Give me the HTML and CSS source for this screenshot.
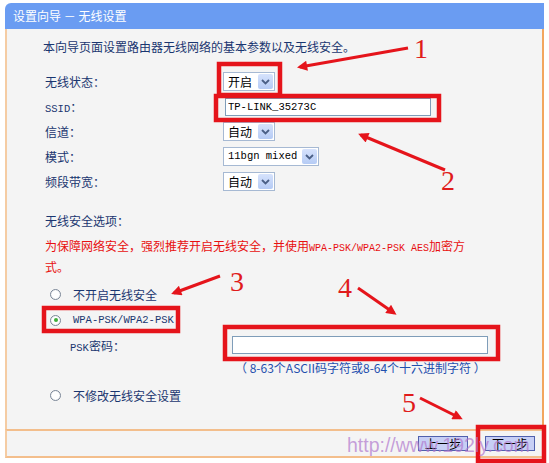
FILE: index.html
```html
<!DOCTYPE html>
<html lang="zh-CN">
<head>
    <meta charset="UTF-8">
    <title>设置向导 - 无线设置</title>
    <link rel="stylesheet" href="styles.css">
</head>
<body>
    <div class="wizard">
        <div class="title">设置向导 － 无线设置</div>
        <div class="content">
            <p class="intro">本向导页面设置路由器无线网络的基本参数以及无线安全。</p>

            <div class="fields">
                <div class="row">
                    <span class="label">无线状态：</span>
                    <span class="select short"><span>开启</span><span class="arrow"><svg width="9" height="6" viewBox="0 0 9 6"><path d="M1 1 L4.5 4.5 L8 1" fill="none" stroke="#4a5f86" stroke-width="1.8"/></svg></span></span>
                </div>
                <div class="row">
                    <span class="label"><span class="en">SSID</span>：</span>
                    <input class="text ssid" type="text" value="TP-LINK_35273C">
                </div>
                <div class="row">
                    <span class="label">信道：</span>
                    <span class="select short"><span>自动</span><span class="arrow"><svg width="9" height="6" viewBox="0 0 9 6"><path d="M1 1 L4.5 4.5 L8 1" fill="none" stroke="#4a5f86" stroke-width="1.8"/></svg></span></span>
                </div>
                <div class="row">
                    <span class="label">模式：</span>
                    <span class="select long"><span class="en">11bgn mixed</span><span class="arrow"><svg width="9" height="6" viewBox="0 0 9 6"><path d="M1 1 L4.5 4.5 L8 1" fill="none" stroke="#4a5f86" stroke-width="1.8"/></svg></span></span>
                </div>
                <div class="row">
                    <span class="label">频段带宽：</span>
                    <span class="select short"><span>自动</span><span class="arrow"><svg width="9" height="6" viewBox="0 0 9 6"><path d="M1 1 L4.5 4.5 L8 1" fill="none" stroke="#4a5f86" stroke-width="1.8"/></svg></span></span>
                </div>
            </div>

            <p class="section">无线安全选项：</p>
            <p class="warn">为保障网络安全，强烈推荐开启无线安全，并使用<span class="en">WPA-PSK/WPA2-PSK AES</span>加密方式。</p>

            <div class="option first"><span class="radio"></span>不开启无线安全</div>
            <div class="option"><span class="radio checked"></span><span class="en">WPA-PSK/WPA2-PSK</span></div>
            <div class="psk">
                <span class="psk-label"><span class="en">PSK</span>密码：</span>
                <input class="text psk-input" type="text">
            </div>
            <p class="hint">（ 8-63个ASCII码字符或8-64个十六进制字符 ）</p>
            <div class="option last"><span class="radio"></span>不修改无线安全设置</div>
        </div>
        <div class="footer">
            <button type="button">上一步</button>
            <button type="button">下一步</button>
        </div>
    </div>

    <!-- red annotations drawn over the screenshot -->
    <svg class="marks" width="549" height="463" viewBox="0 0 549 463">
        <defs>
            <marker id="head" viewBox="0 0 10 10" refX="7" refY="5" markerWidth="4" markerHeight="3.4" orient="auto">
                <path d="M0 0 L10 5 L0 10 z" fill="#e5141b"/>
            </marker>
        </defs>
        <g fill="none" stroke="#e5141b" stroke-width="4.5">
            <rect x="219" y="64" width="61" height="31"/>
            <rect x="216" y="96" width="223" height="24"/>
            <rect x="44" y="308" width="134" height="23"/>
            <rect x="225" y="327" width="273" height="32"/>
            <rect x="478" y="427" width="66" height="34"/>
        </g>
        <g stroke="#e5141b" stroke-width="3" marker-end="url(#head)">
            <line x1="408" y1="48" x2="300" y2="67"/>
            <line x1="445" y1="170" x2="361" y2="135"/>
            <line x1="220" y1="276" x2="174" y2="293"/>
            <line x1="358" y1="288" x2="394" y2="313"/>
            <line x1="420" y1="398" x2="460" y2="418"/>
        </g>
        <g class="num">
            <text x="414" y="58">1</text>
            <text x="441" y="190">2</text>
            <text x="230" y="291">3</text>
            <text x="338" y="297">4</text>
            <text x="402" y="412">5</text>
        </g>
    </svg>
    <div class="watermark">http://www.192ly.com</div>
</body>
</html>
```

FILE: styles.css
```css
body {
    margin: 0;
    background: #fff;
    font-family: "Noto Sans CJK SC", sans-serif;
    font-size: 12px;
    color: #1a3670;
}
p {
    margin: 0;
}
.en {
    font-family: "Liberation Mono", monospace;
    font-size: 10.5px;
    line-height: 1;
}
.wizard {
    width: 539px;
    margin: 3px 0 0 5px;
}
.title {
    height: 26px;
    line-height: 26px;
    padding-left: 8px;
    background: #6a9cf2;
    color: #fff;
    border-top-left-radius: 6px;
}
.content {
    background: #f4f4f4;
    border-left: 2px solid #f5cca3;
    border-right: 2px solid #f2a65e;
    padding: 8px 0 21px 36px;
}
.intro {
    line-height: 20px;
}
.fields {
    margin-top: 12px;
}
.row {
    display: grid;
    grid-template-columns: 180px auto;
    align-items: center;
    height: 25px;
}
.label {
    padding-left: 2px;
}
.select {
    display: flex;
    align-items: center;
    justify-content: space-between;
    box-sizing: border-box;
    height: 19px;
    padding-left: 4px;
    border: 1px solid #a6b9d3;
    background: #fff;
    color: #000;
}
.select.short {
    width: 52px;
}
.select.long {
    width: 96px;
}
.arrow {
    display: flex;
    align-items: center;
    justify-content: center;
    width: 15px;
    height: 15px;
    margin-right: 1px;
    border-radius: 2px;
    background: linear-gradient(#d6e2fc, #b5cbf5);
}
.text {
    box-sizing: border-box;
    height: 18px;
    padding: 0 2px;
    border: 1px solid #7f9db9;
    background: #fff;
    color: #000;
    font-family: "Liberation Mono", monospace;
    font-size: 10.5px;
}
.ssid {
    width: 206px;
    margin-left: 2px;
}
.section {
    margin-top: 17px;
    padding-left: 2px;
    line-height: 20px;
}
.warn {
    width: 428px;
    margin-top: 4px;
    padding-left: 2px;
    line-height: 21px;
    color: #e81010;
}
.warn .en {
    font-size: 10px;
}
.option {
    display: flex;
    align-items: center;
    gap: 12px;
    height: 26px;
    padding-left: 7px;
}
.option.first {
    margin-top: 4px;
}
.option.last {
    margin-top: 4px;
}
.radio {
    box-sizing: border-box;
    width: 11px;
    height: 11px;
    border: 1px solid #7b8798;
    border-radius: 50%;
    background: radial-gradient(circle, #fff 50%, #e4e6ea);
    display: flex;
    align-items: center;
    justify-content: center;
}
.radio.checked::after {
    content: "";
    width: 4px;
    height: 4px;
    border-radius: 50%;
    background: #3fae3a;
}
.psk {
    display: flex;
    align-items: center;
    height: 24px;
    padding-left: 27px;
}
.psk-label {
    width: 162px;
}
.psk-input {
    width: 256px;
}
.hint {
    margin-top: 1px;
    padding-left: 192px;
    line-height: 20px;
    color: #1f4fae;
}
.footer {
    display: flex;
    justify-content: flex-end;
    align-items: center;
    gap: 17px;
    height: 25px;
    padding-right: 7px;
    background: #f4f4f4;
    border: 2px solid #f3be8c;
    border-left-color: #f5cca3;
    border-right-color: #f2a65e;
}
.footer button {
    width: 50px;
    height: 15px;
    padding: 0;
    border: 1px solid #4f60ad;
    background: #c7cff5;
    color: #000;
    font-family: "Noto Sans CJK SC", sans-serif;
    font-size: 12px;
    line-height: 13px;
}
.marks {
    position: absolute;
    top: 0;
    left: 0;
    z-index: 1;
    pointer-events: none;
}
.num text {
    font-family: "Liberation Serif", serif;
    font-size: 28px;
    fill: #e01b1b;
}
.watermark {
    position: absolute;
    left: 347px;
    top: 435px;
    z-index: 2;
    font-family: "Liberation Sans", sans-serif;
    font-size: 19.5px;
    line-height: 20px;
    color: rgba(176, 120, 205, 0.7);
    pointer-events: none;
}
```
